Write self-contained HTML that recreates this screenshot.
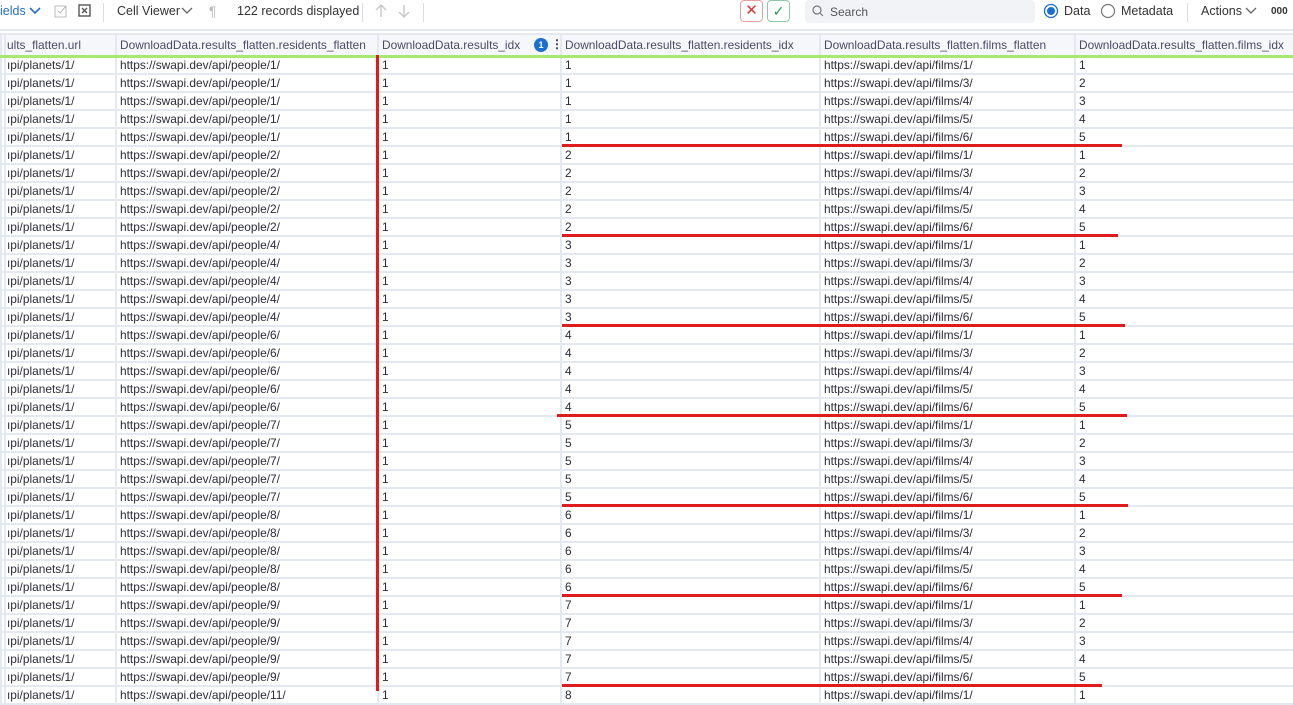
<!DOCTYPE html>
<html><head><meta charset="utf-8"><style>
*{margin:0;padding:0;box-sizing:border-box}
body{width:1293px;height:696px;overflow:hidden;background:#fff;font-family:"Liberation Sans",sans-serif;font-size:12px;color:#2b2b3a;position:relative}
.tb{position:absolute;left:0;top:0;width:1293px;height:31px;border-bottom:2px solid #e3e8f0;background:#fff}
.tb span{position:absolute;top:4px;font-size:12.5px;color:#333}
.sep{position:absolute;top:3px;width:1px;height:19px;background:#d8dce4}
table{position:absolute;left:0;top:33px;border-collapse:collapse;table-layout:fixed;width:1293px}
td,th{border:2px solid #e4e8f1;height:18px;padding:0 0 0 3px;white-space:nowrap;overflow:hidden;font-weight:normal;text-align:left;line-height:14px;font-size:11.9px}
th{height:22px;background:#f6f7fb;color:#4a4a66;border-bottom:3px solid #a8e870}
td:first-child,th:first-child{padding:0}
td:nth-child(2),th:nth-child(2){padding-left:1px}
.r{position:absolute;background:#e01b1b}
</style></head><body>
<div class="tb">
<span style="left:0;color:#2a6fc4">ields</span>
<svg style="position:absolute;left:29px;top:7px" width="12" height="8"><path d="M1 1l5 5 5-5" stroke="#2a6fc4" stroke-width="1.6" fill="none"/></svg>
<svg style="position:absolute;left:54px;top:4px" width="14" height="14"><rect x="1" y="2" width="11" height="11" fill="none" stroke="#bbb"/><path d="M4 7l2 2 6-7" stroke="#bbb" fill="none"/></svg>
<svg style="position:absolute;left:78px;top:4px" width="14" height="14"><rect x="1" y="1" width="11" height="11" fill="none" stroke="#555" stroke-width="1.4"/><path d="M4 4l5 5M9 4l-5 5" stroke="#555" stroke-width="1.4"/></svg>
<div class="sep" style="left:103px"></div>
<span style="left:117px">Cell Viewer</span>
<svg style="position:absolute;left:181px;top:7px" width="12" height="8"><path d="M1 1l5 5 5-5" stroke="#666" stroke-width="1.3" fill="none"/></svg>
<span style="left:209px;color:#bbb;font-size:14px;top:3px">¶</span>
<span style="left:237px;color:#333">122 records displayed</span>
<div class="sep" style="left:362px"></div>
<svg style="position:absolute;left:374px;top:4px" width="14" height="14"><path d="M7 1v12M2 6l5-5 5 5" stroke="#c8c8c8" stroke-width="1.4" fill="none"/></svg>
<svg style="position:absolute;left:397px;top:4px" width="14" height="14"><path d="M7 1v12M2 8l5 5 5-5" stroke="#c8c8c8" stroke-width="1.4" fill="none"/></svg>
<div class="sep" style="left:423px"></div>
<div style="position:absolute;left:740px;top:0;width:23px;height:22px;border:1px solid #e8a0a0;border-radius:4px;color:#d33;text-align:center;font-size:15px;line-height:20px">✕</div>
<div style="position:absolute;left:767px;top:0;width:23px;height:22px;border:1px solid #8cc9a8;border-radius:4px;color:#2a9a5a;text-align:center;font-size:14px;line-height:20px">✓</div>
<div style="position:absolute;left:805px;top:0;width:230px;height:23px;background:#f1f3f7;border-radius:4px"></div>
<svg style="position:absolute;left:812px;top:5px" width="12" height="12"><circle cx="5" cy="5" r="4" fill="none" stroke="#777" stroke-width="1.2"/><path d="M8 8l3 3" stroke="#777" stroke-width="1.2"/></svg>
<span style="left:830px;color:#555;font-size:12px;top:5px">Search</span>
<svg style="position:absolute;left:1043px;top:3px" width="16" height="16"><circle cx="8" cy="8" r="6.5" fill="none" stroke="#1a6fd1" stroke-width="1.3"/><circle cx="8" cy="8" r="4" fill="#1a6fd1"/></svg>
<span style="left:1064px">Data</span>
<svg style="position:absolute;left:1100px;top:3px" width="16" height="16"><circle cx="8" cy="8" r="6.5" fill="none" stroke="#777" stroke-width="1.2"/></svg>
<span style="left:1121px">Metadata</span>
<div class="sep" style="left:1187px"></div>
<span style="left:1201px">Actions</span>
<svg style="position:absolute;left:1245px;top:7px" width="12" height="8"><path d="M1 1l5 5 5-5" stroke="#666" stroke-width="1.3" fill="none"/></svg>
<span style="left:1271px;font-size:10px;font-weight:bold;top:6px">000</span>
</div>
<table>
<colgroup><col style="width:4px"><col style="width:111px"><col style="width:262px"><col style="width:183px"><col style="width:259px"><col style="width:255px"><col style="width:219px"></colgroup>
<tr><th></th><th>ults_flatten.url</th><th>DownloadData.results_flatten.residents_flatten</th><th>DownloadData.results_idx<span style="position:absolute;left:533px;top:4px;width:14px;height:14px;border-radius:7px;background:#1a6fd1;color:#fff;font-size:9px;text-align:center;line-height:14px;font-weight:bold">1</span><span style="position:absolute;left:550px;top:3px;font-weight:bold;color:#333">⋮</span></th><th>DownloadData.results_flatten.residents_idx</th><th>DownloadData.results_flatten.films_flatten</th><th>DownloadData.results_flatten.films_idx</th></tr>
<tr><td></td><td>ıpi/planets/1/</td><td>https://swapi.dev/api/people/1/</td><td>1</td><td>1</td><td>https://swapi.dev/api/films/1/</td><td>1</td></tr>
<tr><td></td><td>ıpi/planets/1/</td><td>https://swapi.dev/api/people/1/</td><td>1</td><td>1</td><td>https://swapi.dev/api/films/3/</td><td>2</td></tr>
<tr><td></td><td>ıpi/planets/1/</td><td>https://swapi.dev/api/people/1/</td><td>1</td><td>1</td><td>https://swapi.dev/api/films/4/</td><td>3</td></tr>
<tr><td></td><td>ıpi/planets/1/</td><td>https://swapi.dev/api/people/1/</td><td>1</td><td>1</td><td>https://swapi.dev/api/films/5/</td><td>4</td></tr>
<tr><td></td><td>ıpi/planets/1/</td><td>https://swapi.dev/api/people/1/</td><td>1</td><td>1</td><td>https://swapi.dev/api/films/6/</td><td>5</td></tr>
<tr><td></td><td>ıpi/planets/1/</td><td>https://swapi.dev/api/people/2/</td><td>1</td><td>2</td><td>https://swapi.dev/api/films/1/</td><td>1</td></tr>
<tr><td></td><td>ıpi/planets/1/</td><td>https://swapi.dev/api/people/2/</td><td>1</td><td>2</td><td>https://swapi.dev/api/films/3/</td><td>2</td></tr>
<tr><td></td><td>ıpi/planets/1/</td><td>https://swapi.dev/api/people/2/</td><td>1</td><td>2</td><td>https://swapi.dev/api/films/4/</td><td>3</td></tr>
<tr><td></td><td>ıpi/planets/1/</td><td>https://swapi.dev/api/people/2/</td><td>1</td><td>2</td><td>https://swapi.dev/api/films/5/</td><td>4</td></tr>
<tr><td></td><td>ıpi/planets/1/</td><td>https://swapi.dev/api/people/2/</td><td>1</td><td>2</td><td>https://swapi.dev/api/films/6/</td><td>5</td></tr>
<tr><td></td><td>ıpi/planets/1/</td><td>https://swapi.dev/api/people/4/</td><td>1</td><td>3</td><td>https://swapi.dev/api/films/1/</td><td>1</td></tr>
<tr><td></td><td>ıpi/planets/1/</td><td>https://swapi.dev/api/people/4/</td><td>1</td><td>3</td><td>https://swapi.dev/api/films/3/</td><td>2</td></tr>
<tr><td></td><td>ıpi/planets/1/</td><td>https://swapi.dev/api/people/4/</td><td>1</td><td>3</td><td>https://swapi.dev/api/films/4/</td><td>3</td></tr>
<tr><td></td><td>ıpi/planets/1/</td><td>https://swapi.dev/api/people/4/</td><td>1</td><td>3</td><td>https://swapi.dev/api/films/5/</td><td>4</td></tr>
<tr><td></td><td>ıpi/planets/1/</td><td>https://swapi.dev/api/people/4/</td><td>1</td><td>3</td><td>https://swapi.dev/api/films/6/</td><td>5</td></tr>
<tr><td></td><td>ıpi/planets/1/</td><td>https://swapi.dev/api/people/6/</td><td>1</td><td>4</td><td>https://swapi.dev/api/films/1/</td><td>1</td></tr>
<tr><td></td><td>ıpi/planets/1/</td><td>https://swapi.dev/api/people/6/</td><td>1</td><td>4</td><td>https://swapi.dev/api/films/3/</td><td>2</td></tr>
<tr><td></td><td>ıpi/planets/1/</td><td>https://swapi.dev/api/people/6/</td><td>1</td><td>4</td><td>https://swapi.dev/api/films/4/</td><td>3</td></tr>
<tr><td></td><td>ıpi/planets/1/</td><td>https://swapi.dev/api/people/6/</td><td>1</td><td>4</td><td>https://swapi.dev/api/films/5/</td><td>4</td></tr>
<tr><td></td><td>ıpi/planets/1/</td><td>https://swapi.dev/api/people/6/</td><td>1</td><td>4</td><td>https://swapi.dev/api/films/6/</td><td>5</td></tr>
<tr><td></td><td>ıpi/planets/1/</td><td>https://swapi.dev/api/people/7/</td><td>1</td><td>5</td><td>https://swapi.dev/api/films/1/</td><td>1</td></tr>
<tr><td></td><td>ıpi/planets/1/</td><td>https://swapi.dev/api/people/7/</td><td>1</td><td>5</td><td>https://swapi.dev/api/films/3/</td><td>2</td></tr>
<tr><td></td><td>ıpi/planets/1/</td><td>https://swapi.dev/api/people/7/</td><td>1</td><td>5</td><td>https://swapi.dev/api/films/4/</td><td>3</td></tr>
<tr><td></td><td>ıpi/planets/1/</td><td>https://swapi.dev/api/people/7/</td><td>1</td><td>5</td><td>https://swapi.dev/api/films/5/</td><td>4</td></tr>
<tr><td></td><td>ıpi/planets/1/</td><td>https://swapi.dev/api/people/7/</td><td>1</td><td>5</td><td>https://swapi.dev/api/films/6/</td><td>5</td></tr>
<tr><td></td><td>ıpi/planets/1/</td><td>https://swapi.dev/api/people/8/</td><td>1</td><td>6</td><td>https://swapi.dev/api/films/1/</td><td>1</td></tr>
<tr><td></td><td>ıpi/planets/1/</td><td>https://swapi.dev/api/people/8/</td><td>1</td><td>6</td><td>https://swapi.dev/api/films/3/</td><td>2</td></tr>
<tr><td></td><td>ıpi/planets/1/</td><td>https://swapi.dev/api/people/8/</td><td>1</td><td>6</td><td>https://swapi.dev/api/films/4/</td><td>3</td></tr>
<tr><td></td><td>ıpi/planets/1/</td><td>https://swapi.dev/api/people/8/</td><td>1</td><td>6</td><td>https://swapi.dev/api/films/5/</td><td>4</td></tr>
<tr><td></td><td>ıpi/planets/1/</td><td>https://swapi.dev/api/people/8/</td><td>1</td><td>6</td><td>https://swapi.dev/api/films/6/</td><td>5</td></tr>
<tr><td></td><td>ıpi/planets/1/</td><td>https://swapi.dev/api/people/9/</td><td>1</td><td>7</td><td>https://swapi.dev/api/films/1/</td><td>1</td></tr>
<tr><td></td><td>ıpi/planets/1/</td><td>https://swapi.dev/api/people/9/</td><td>1</td><td>7</td><td>https://swapi.dev/api/films/3/</td><td>2</td></tr>
<tr><td></td><td>ıpi/planets/1/</td><td>https://swapi.dev/api/people/9/</td><td>1</td><td>7</td><td>https://swapi.dev/api/films/4/</td><td>3</td></tr>
<tr><td></td><td>ıpi/planets/1/</td><td>https://swapi.dev/api/people/9/</td><td>1</td><td>7</td><td>https://swapi.dev/api/films/5/</td><td>4</td></tr>
<tr><td></td><td>ıpi/planets/1/</td><td>https://swapi.dev/api/people/9/</td><td>1</td><td>7</td><td>https://swapi.dev/api/films/6/</td><td>5</td></tr>
<tr><td></td><td>ıpi/planets/1/</td><td>https://swapi.dev/api/people/11/</td><td>1</td><td>8</td><td>https://swapi.dev/api/films/1/</td><td>1</td></tr>
</table>
<div class="r" style="left:376px;top:55px;width:3px;height:636px"></div>
<div class="r" style="left:562px;top:144px;width:560px;height:3px"></div>
<div class="r" style="left:562px;top:234px;width:556px;height:3px"></div>
<div class="r" style="left:562px;top:324px;width:563px;height:3px"></div>
<div class="r" style="left:557px;top:414px;width:570px;height:3px"></div>
<div class="r" style="left:562px;top:504px;width:566px;height:3px"></div>
<div class="r" style="left:562px;top:594px;width:560px;height:3px"></div>
<div class="r" style="left:562px;top:684px;width:540px;height:3px"></div>
</body></html>
